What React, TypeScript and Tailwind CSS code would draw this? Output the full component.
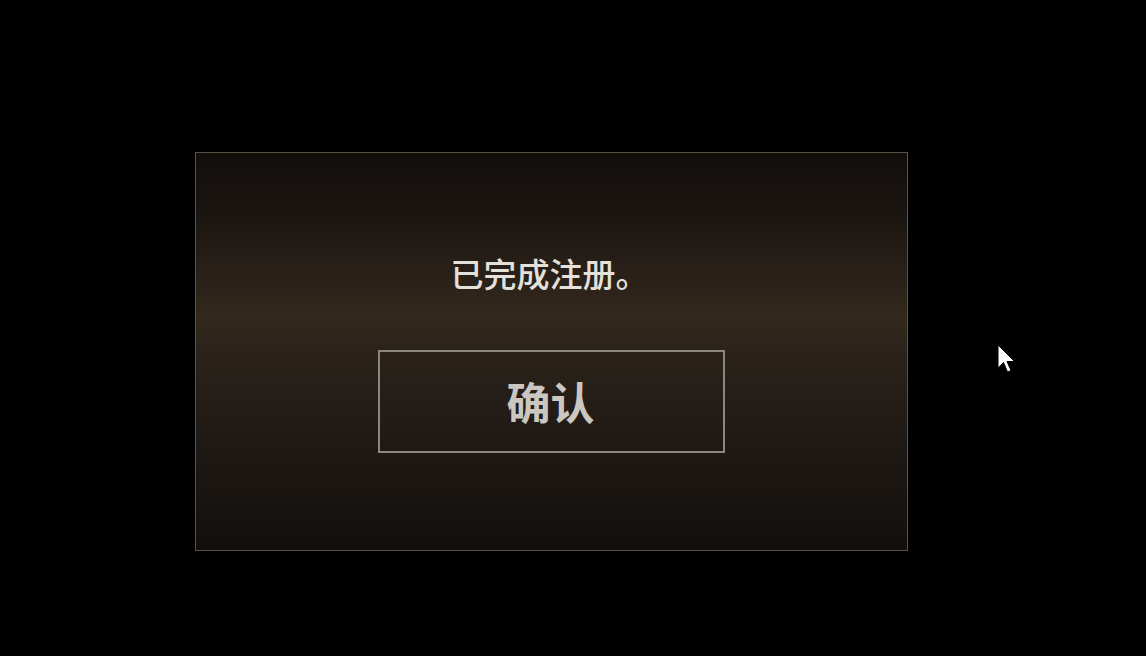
import React from 'react';

const Cursor: React.FC = () => (
  <svg
    className="absolute left-[997px] top-[344px]"
    width="20"
    height="32"
    viewBox="0 0 20 32"
  >
    <path
      d="M1 1 L1 24 L6.5 18.5 L10.5 28 L14 26.5 L10 17.5 L17.5 17.5 Z"
      fill="#ffffff"
      stroke="#000000"
      strokeWidth="1"
      strokeLinejoin="round"
    />
  </svg>
);

const App: React.FC = () => {
  return (
    <div
      className="relative w-[1146px] h-[656px] bg-black overflow-hidden pt-[152px] pl-[195px]"
      style={{ fontFamily: '"Noto Sans CJK SC", "Noto Sans", sans-serif' }}
    >
      <div className="w-[713px] h-[399px] border border-[#5c5345] bg-[linear-gradient(to_bottom,#120e0b_0%,#1b1511_15%,#271f18_29%,#33281d_41%,#2b231b_50%,#231c17_65%,#1a1511_85%,#110f0d_100%)] flex flex-col items-center pt-[98px]">
        <p className="text-[33px] leading-[44px] font-medium text-[#e4e0da] mr-[4px]">已完成注册。</p>
        <button className="mt-[55px] w-[347px] h-[103px] border-2 border-[#8c8680] bg-transparent flex items-center justify-center">
          <span className="text-[44px] font-semibold leading-none text-[#cbc6c0] mb-[2px] mr-[2px]">确认</span>
        </button>
      </div>
      <Cursor />
    </div>
  );
};

export default App;
